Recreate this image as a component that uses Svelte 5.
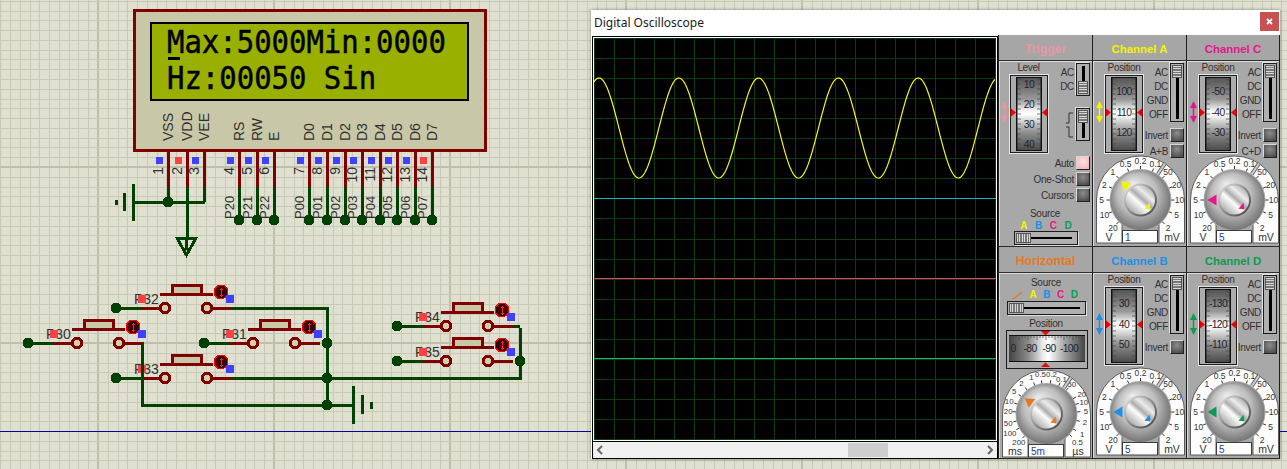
<script>
  const MAJOR = 176;
  const STEP = MAJOR / 18;
  const range = (a, b) => Array.from({ length: b - a + 1 }, (_, i) => a + i);
  const vLines = range(-11, 125).map((i) => ({ x: Math.round(98 + i * STEP), major: i % 18 === 0 }));
  const hLines = range(-18, 33).map((i) => ({ y: Math.round(167 + i * STEP), major: i % 18 === 0 }));

  const pins = [
    [168, 1, 'VSS'], [187, 2, 'VDD'], [204, 3, 'VEE'],
    [239, 4, 'RS', 'P20'], [257, 5, 'RW', 'P21'], [274, 6, 'E', 'P22'],
    [309, 7, 'D0', 'P00'], [327, 8, 'D1', 'P01'], [345, 9, 'D2', 'P02'], [362, 10, 'D3', 'P03'],
    [380, 11, 'D4', 'P04'], [397, 12, 'D5', 'P05'], [415, 13, 'D6', 'P06'], [432, 14, 'D7', 'P07']
  ];
  const switches = [
    [28, 343, 'P30'], [116, 308, 'P32'], [116, 378, 'P33'], [204, 343, 'P31'], [397, 326, 'P34'], [397, 361, 'P35']
  ];
  const junctions = [[327, 343], [327, 378], [327, 405], [520, 361]];

  const gridX = range(0, 20).map((i) => Math.round(i * 20.05));
  const gridY = range(0, 20).map((i) => Math.round(i * 20.05));
  const sine = range(0, 401)
    .map((x) => `${x},${(90 - 50 * Math.cos((2 * Math.PI * (x - 5)) / 79.8)).toFixed(1)}`)
    .join(' ');

  const chNames = ['20', '10', '5', '2', '1', '0.5', '0.2', '0.1', '50', '20', '10', '5', '2'];
  const chLabels = chNames.map((t, i) => {
    const a = ((i - 6) * 22.5 * Math.PI) / 180;
    return [t, 39 * Math.sin(a), -39 * Math.cos(a)];
  });
  const hzLabels = [
    ['200', 67, 588], ['100', 40, 562], ['50', 35, 532], ['20', 35, 497], ['10', 38, 467], ['5', 53, 437],
    ['2', 75, 412], ['1', 105, 395], ['0.5', 132, 386], ['0.2', 165, 384], ['0.1', 195, 401], ['50', 226, 414],
    ['20', 256, 444], ['10', 262, 468], ['5', 268, 497], ['2', 265, 530], ['1', 257, 565], ['0.5', 243, 588]
  ].map(([t, x, y]) => [t, (x - 150) / 3, (y - 505) / 3]);
  const ticks = (labels) =>
    labels.map(([, dx, dy]) => {
      const l = Math.hypot(dx, dy);
      return [dx / l, dy / l];
    });

  const COLORS = { A: '#f4f400', B: '#1a90e8', C: '#e8168c', D: '#0c9c50' };
</script>

{#snippet sw(x, y, label)}
  <g transform="translate({x} {y})">
    <line class="gw" x1="0" y1="0" x2="26" y2="0" />
    <line class="rw" x1="26" y1="0" x2="49" y2="0" />
    <line class="rw" x1="91" y1="0" x2="116" y2="0" />
    <line class="rw" x1="44" y1="-14" x2="97" y2="-14" />
    <rect class="btn" x="56" y="-23" width="29" height="9" />
    <circle class="ring" cx="49" cy="0" r="4.8" />
    <circle class="ring" cx="91" cy="0" r="4.8" />
    <circle class="dot" cx="0" cy="0" r="5.5" />
    <text class="ref" x="18" y="-4">{label}</text>
    <rect class="pad-r" x="22" y="-13" width="8" height="8" />
    <circle class="led" cx="105" cy="-16" r="6.8" />
    <path class="led-a" d="M105 -20.5V-11.5M103.5 -19H106.5M103.5 -13H106.5" />
    <rect class="pad-b" x="110" y="-13" width="8" height="8" />
  </g>
{/snippet}

{#snippet arrow(color, op = 1)}
  <g fill={color} stroke={color} opacity={op}>
    <line x1="3.5" y1="29" x2="3.5" y2="47" stroke-width="1.5" />
    <polygon stroke="none" points="3.5,27 7,34 0,34" />
    <polygon stroke="none" points="3.5,49 7,42 0,42" />
  </g>
{/snippet}

{#snippet drum(nums, ys, color, op = 1)}
  <svg class="drum" width="48" height="80" viewBox="0 0 48 80">
    {@render arrow(color, op)}
    <rect x="8.5" y="0.5" width="39" height="79" fill="#aaa" stroke="#e6e6e6" />
    <rect x="9.5" y="1.5" width="37" height="77" fill="#acacac" stroke="#1c1c1c" />
    <rect x="15" y="3" width="26" height="74" fill="#111" />
    <rect x="16.5" y="4" width="23" height="72" fill="url(#drumV)" />
    {#each range(0, 14) as k}
      <line x1="16.5" x2="20" y1={5 + k * 5} y2={5 + k * 5} stroke="#444" stroke-width="0.7" />
      <line x1="36" x2="39.5" y1={5 + k * 5} y2={5 + k * 5} stroke="#444" stroke-width="0.7" />
    {/each}
    {#each nums as n, i}
      <text class="drum-n" x="28" y={ys[i] + 4}>{n}</text>
    {/each}
    <polygon fill="#f00000" points="9.5,34 15,38.5 9.5,43" />
    <polygon fill="#f00000" points="46.5,34 41,38.5 46.5,43" />
  </svg>
{/snippet}

{#snippet vslider(h, low)}
  <div class="vs" style="height:{h}px">
    <div class="vs-slot"></div>
    <div class={low ? 'vs-thumb low' : 'vs-thumb'}></div>
  </div>
{/snippet}

{#snippet hslider(w)}
  <div class="hs" style="width:{w}px">
    <div class="hs-slot"></div>
    <div class="hs-thumb"></div>
  </div>
{/snippet}

{#snippet dial(labels, angle, color, value, uL, uR)}
  <svg class="dial" width="91" height="88" viewBox="0 0 91 88">
    <path d="M1.5 87V44A44 44 0 0 1 89.5 44V87H64V68H27V87Z" fill="#fdfdfd" stroke="#5a5a5a" />
    {#each ticks(labels) as [ux, uy]}
      <line x1={45.5 + ux * 30} y1={44 + uy * 30} x2={45.5 + ux * 34} y2={44 + uy * 34} stroke="#333" />
    {/each}
    {#each labels as [t, dx, dy]}
      <text class={labels.length > 13 ? 'dial-n small' : 'dial-n'} x={45.5 + dx} y={44 + dy + 3}>{t}</text>
    {/each}
    <line x1={45.5 + 31 * 0.556} y1={44 - 31 * 0.831} x2={45.5 + 44 * 0.556} y2={44 - 44 * 0.831} stroke="#666" stroke-width="4" />
    <line x1={45.5 + 31 * 0.556} y1={44 - 31 * 0.831} x2={45.5 + 44 * 0.556} y2={44 - 44 * 0.831} stroke="#cfcfcf" stroke-width="2" />
    <circle cx="45.5" cy="44" r="31" fill="#a8a8a8" />
    <circle cx="45.5" cy="44" r="30" fill="url(#knob)" />
    <circle cx="45.5" cy="44" r="16.5" fill="url(#capRing)" />
    <circle cx="45.5" cy="44" r="14.5" fill="url(#cap)" />
    <polygon fill={color} points="0,-27 -5.5,-18 5.5,-18" transform="translate(45.5 44) rotate({angle})" />
    <polygon fill={color} points="54.5,46.7 55.5,53.3 49.5,52.7" />
    <rect x="27.5" y="74.5" width="35" height="12.5" fill="#fff" stroke="#3c3c3c" />
    <text class="dial-v" x="30" y="85">{value}</text>
    <text class="dial-u" x="14" y="85">{uL}</text>
    <text class="dial-u" x="77" y="85">{uR}</text>
  </svg>
{/snippet}

{#snippet channel(name, nums, angle, value, sum)}
  <section class="cell">
    <header class="hd" style="color:{COLORS[name]}">Channel {name}</header>
    <div class="body">
      <div class="top">
        <div class="left">
          <div class="cap">Position</div>
          {@render drum(nums, [17, 38, 58], COLORS[name])}
        </div>
        <div class="right">
          <div class="modes">
            <div class="ml">
              <span>AC</span><span>DC</span><span>GND</span><span>OFF</span>
            </div>
            {@render vslider(59, false)}
          </div>
          <div class="brow first"><span>Invert</span><i class="pb"></i></div>
          {#if sum}
            <div class="brow"><span>{sum}</span><i class="pb"></i></div>
          {/if}
        </div>
      </div>
      {@render dial(chLabels, angle, COLORS[name], value, 'V', 'mV')}
    </div>
  </section>
{/snippet}

<main class="page">
  <svg class="sch" width="1287" height="469" viewBox="0 0 1287 469">
    <defs>
      <linearGradient id="drumV" x1="0" y1="0" x2="0" y2="1">
        <stop offset="0" stop-color="#555" />
        <stop offset="0.3" stop-color="#9a9a9a" />
        <stop offset="0.44" stop-color="#eee" />
        <stop offset="0.5" stop-color="#fff" />
        <stop offset="0.58" stop-color="#ddd" />
        <stop offset="0.75" stop-color="#909090" />
        <stop offset="1" stop-color="#4c4c4c" />
      </linearGradient>
      <linearGradient id="drumH" x1="0" y1="0" x2="1" y2="0">
        <stop offset="0" stop-color="#444" />
        <stop offset="0.25" stop-color="#8a8a8a" />
        <stop offset="0.45" stop-color="#eee" />
        <stop offset="0.52" stop-color="#fff" />
        <stop offset="0.72" stop-color="#aaa" />
        <stop offset="1" stop-color="#444" />
      </linearGradient>
      <radialGradient id="knob" cx="0.5" cy="0.5" r="0.55" fx="0.36" fy="0.22">
        <stop offset="0" stop-color="#ececec" />
        <stop offset="0.6" stop-color="#bcbcbc" />
        <stop offset="1" stop-color="#6a6a6a" />
      </radialGradient>
      <linearGradient id="capRing" x1="0.1" y1="0.1" x2="0.9" y2="0.9">
        <stop offset="0" stop-color="#d8d8d8" />
        <stop offset="0.5" stop-color="#8c8c8c" />
        <stop offset="1" stop-color="#4c4c4c" />
      </linearGradient>
      <linearGradient id="cap" x1="0.1" y1="0.95" x2="0.9" y2="0.05">
        <stop offset="0" stop-color="#9c9c9c" />
        <stop offset="0.3" stop-color="#e2e2e2" />
        <stop offset="0.42" stop-color="#fcfcfc" />
        <stop offset="0.55" stop-color="#acacac" />
        <stop offset="0.72" stop-color="#ececec" />
        <stop offset="1" stop-color="#a0a0a0" />
      </linearGradient>
    </defs>

    <g class="grid">
      {#each vLines as l}
        <line x1={l.x} x2={l.x} y1="0" y2="469" stroke={l.major ? '#bfbfae' : '#c9c9b8'} stroke-width={l.major ? 2 : 1} />
      {/each}
      {#each hLines as l}
        <line y1={l.y} y2={l.y} x1="0" x2="1287" stroke={l.major ? '#bfbfae' : '#c9c9b8'} stroke-width={l.major ? 2 : 1} />
      {/each}
    </g>
    <line x1="0" x2="1287" y1="431" y2="431" stroke="#0000a0" />

    <rect x="134" y="10" width="351" height="140" fill="#c8c8a8" stroke="#800000" stroke-width="3" />
    <rect x="151" y="23" width="317" height="77" fill="#99b000" stroke="#000" stroke-width="2" />
    <rect x="150" y="99" width="18" height="2" fill="#000" />
    <rect x="451" y="99" width="18" height="2" fill="#000" />
    <rect x="168" y="57" width="12" height="3" fill="#000" />
    <text class="lcd" transform="translate(167 53) scale(0.905 1)">Max:5000Min:0000</text>
    <text class="lcd" transform="translate(167 89) scale(0.905 1)">Hz:00050 Sin</text>

    {#each pins as [x, n, name, net]}
      <line class="rw" x1={x} x2={x} y1="151" y2="187" />
      <line class="gw" x1={x} x2={x} y1="187" y2={x > 210 ? 220 : 202} />
      <rect class={n === 2 || n === 14 ? 'pad-r' : 'pad-b'} x={x - 12.5} y="157" width="7" height="7" />
      <text class="pin" transform="translate({x + 5} 141) rotate(-90)">{name}</text>
      <text class="pin num" transform="translate({x - 5} 167) rotate(-90)">{n}</text>
      {#if net}
        <text class="pin net" transform="translate({x - 5} 219) rotate(-90)">{net}</text>
        <circle class="dot" cx={x} cy="220" r="5.5" />
      {/if}
    {/each}
    <path class="gw" d="M134 202H205M187 202V238" />
    <circle class="dot" cx="168" cy="202" r="5.5" />
    <path class="gb" d="M133 184V221" />
    <path class="gb" d="M124 193V211" />
    <path class="gb" d="M116 200V205" />
    <path class="gw" d="M177 238H196L186.5 255Z M186.5 238V250" />

    {#each switches as [x, y, label]}
      {@render sw(x, y, label)}
    {/each}
    <path class="gw" d="M232 308H327V405M232 378H520V328M513 326H520M142 343V405H353" />
    {#each junctions as [x, y]}
      <circle class="dot" cx={x} cy={y} r="5.5" />
    {/each}
    <path class="gb" d="M353 386V424" />
    <path class="gb" d="M362 395V414" />
    <path class="gb" d="M371 402V409" />
  </svg>

  <div class="win">
    <div class="title">
      <span>Digital Oscilloscope</span>
      <button class="close" aria-label="close"><svg width="7" height="7" viewBox="0 0 7 7"><path d="M1 1L6 6M6 1L1 6" stroke="#fff" stroke-width="1.8" /></svg></button>
    </div>
    <div class="main">
      <div class="scope">
        <svg class="screen" width="402" height="402" viewBox="0 0 402 402">
          <rect width="402" height="402" fill="#000" />
          {#each gridX as x}
            <line x1={x + 0.5} x2={x + 0.5} y1="0" y2="402" stroke="#0c3c10" />
          {/each}
          {#each gridY as y}
            <line y1={y + 0.5} y2={y + 0.5} x1="0" x2="402" stroke="#0c3c10" />
          {/each}
          <line x1="0" x2="402" y1="160.5" y2="160.5" stroke="#12b8c0" />
          <line x1="0" x2="402" y1="240.5" y2="240.5" stroke="#e84060" />
          <line x1="0" x2="402" y1="320.5" y2="320.5" stroke="#10c060" />
          <polyline points={sine} fill="none" stroke="#f6f620" stroke-width="1.2" />
        </svg>
        <div class="sbar">
          <svg width="8" height="10" viewBox="0 0 8 10"><path d="M6 1L2 5L6 9" fill="none" stroke="#666" stroke-width="2" /></svg>
          <div class="thumb"></div>
          <svg width="8" height="10" viewBox="0 0 8 10"><path d="M2 1L6 5L2 9" fill="none" stroke="#666" stroke-width="2" /></svg>
        </div>
      </div>

      <div class="panel">
        <section class="cell">
          <header class="hd big" style="color:#e898a4">Trigger</header>
          <div class="body">
            <div class="top trig">
              <div class="left">
                <div class="cap">Level</div>
                {@render drum(['10', '20', '30', '40'], [10, 30, 50, 70], '#e898a4', 0.9)}
              </div>
              <div class="right">
                <div class="modes">
                  <div class="ml"><span>AC</span><span>DC</span></div>
                  {@render vslider(33, true)}
                </div>
                <div class="modes edge">
                  <svg width="9" height="26" viewBox="0 0 9 26">
                    <path d="M1 11H4V1H8M1 15H4V25H8" fill="none" stroke="#333" />
                  </svg>
                  {@render vslider(33, false)}
                </div>
              </div>
            </div>
            <div class="btns">
              <div class="brow"><span>Auto</span><i class="pb lit"></i></div>
              <div class="brow"><span>One-Shot</span><i class="pb"></i></div>
              <div class="brow"><span>Cursors</span><i class="pb"></i></div>
            </div>
            <div class="src t-src">Source</div>
            <div class="abcd t-abcd">
              {#each Object.entries(COLORS) as [k, c]}<b style="color:{c}">{k}</b>{/each}
            </div>
            <div class="t-slider">{@render hslider(64)}</div>
          </div>
        </section>

        {@render channel('A', ['100', '110', '120'], -45, '1', 'A+B')}
        {@render channel('C', ['-50', '-40', '-30'], -90, '5', 'C+D')}

        <section class="cell">
          <header class="hd big" style="color:#e87820">Horizontal</header>
          <div class="body">
            <div class="src h-src">Source</div>
            <div class="abcd h-abcd">
              <svg width="11" height="8" viewBox="0 0 11 8"><path d="M0 7.5H2L10 1" fill="none" stroke="#e87820" stroke-width="1.2" /></svg>
              {#each Object.entries(COLORS) as [k, c]}<b style="color:{c}">{k}</b>{/each}
            </div>
            <div class="h-slider">{@render hslider(79)}</div>
            <div class="src h-pos">Position</div>
            <svg class="hdrum" width="82" height="39" viewBox="0 0 82 39">
              <rect x="0.5" y="0.5" width="81" height="38" fill="#acacac" stroke="#1c1c1c" />
              <rect x="3" y="5" width="76" height="27" fill="#111" />
              <rect x="3" y="6" width="76" height="25" fill="url(#drumH)" />
              {#each range(0, 24) as k}
                <line x1={4 + k * 3} x2={4 + k * 3} y1="6" y2={k % 3 === 0 ? 10 : 8} stroke="#444" stroke-width="0.7" />
              {/each}
              <text class="drum-n" x="7" y="22">0</text>
              <text class="drum-n" x="24" y="22">-80</text>
              <text class="drum-n" x="43" y="22">-90</text>
              <text class="drum-n" x="63" y="22">-100</text>
              <polygon fill="#f00000" points="35,1 44,1 39.5,5.5" />
              <polygon fill="#f00000" points="35,37 44,37 39.5,32.5" />
            </svg>
            {@render dial(hzLabels, -54, '#e87820', '5m', 'ms', 'µs')}
          </div>
        </section>

        {@render channel('B', ['30', '40', '50'], -90, '5', '')}
        {@render channel('D', ['-130', '-120', '-110'], -90, '5', '')}
      </div>
    </div>
  </div>
</main>

<style>
  :global(body) {
    margin: 0;
    background: #e0e0d0;
  }
  .page {
    position: relative;
    width: 1287px;
    height: 469px;
    overflow: hidden;
    font-family: 'Liberation Sans', Arial, sans-serif;
  }
  .sch {
    position: absolute;
    inset: 0;
    shape-rendering: crispEdges;
  }
  .rw {
    stroke: #800000;
    stroke-width: 3;
    fill: none;
  }
  .gw {
    stroke: #004000;
    stroke-width: 3;
    fill: none;
  }
  .gb {
    stroke: #004000;
    stroke-width: 3;
    fill: none;
  }
  .btn {
    fill: #c8c8a8;
    stroke: #800000;
    stroke-width: 3;
  }
  .ring {
    fill: #d0d0b0;
    stroke: #800000;
    stroke-width: 3;
  }
  .dot {
    fill: #004000;
  }
  .pad-r {
    fill: #ff4040;
  }
  .pad-b {
    fill: #4040ff;
  }
  .led {
    fill: #3c0000;
    stroke: #ff0000;
    stroke-width: 1.4;
  }
  .led-a {
    stroke: #ff2020;
    fill: none;
  }
  .ref {
    font: 14px 'Liberation Sans', Arial, sans-serif;
    fill: #303030;
  }
  .lcd {
    font: 32px 'DejaVu Sans Mono', 'Liberation Mono', monospace;
    fill: #000;
    stroke: #000;
    stroke-width: 0.5px;
    white-space: pre;
  }
  .pin {
    font: 14px 'Liberation Sans', Arial, sans-serif;
    fill: #303030;
  }
  .num {
    text-anchor: end;
  }
  .net {
    font-size: 13px;
  }

  .win {
    position: absolute;
    left: 591px;
    top: 10px;
    width: 689px;
    height: 449px;
    background: #fff;
    box-shadow: 0 0 3px rgba(0, 0, 0, 0.45);
    display: flex;
    flex-direction: column;
  }
  .title {
    height: 25px;
    flex: none;
    display: flex;
    align-items: center;
    justify-content: space-between;
    padding-left: 3px;
    font: 12px 'Noto Sans', 'Open Sans', sans-serif;
    color: #1a1a1a;
  }
  .close {
    width: 19px;
    height: 19px;
    margin: 0 1px 3px 0;
    padding: 0;
    border: 0;
    background: #c75050;
    display: flex;
    align-items: center;
    justify-content: center;
  }
  .main {
    flex: 1;
    display: flex;
    min-height: 0;
  }
  .scope {
    width: 407px;
    flex: none;
    padding: 1px 0 0 1px;
    box-sizing: border-box;
    display: flex;
    flex-direction: column;
  }
  .screen {
    display: block;
    border: 1px solid #000;
    padding: 1px;
    background: #fff;
  }
  .sbar {
    flex: 1;
    width: 406px;
    box-sizing: border-box;
    background: #f0f0f0;
    border-bottom: 1px solid #000;
    border-left: 1px solid #000;
    border-right: 1px solid #000;
    display: flex;
    align-items: center;
    justify-content: space-between;
    position: relative;
    padding: 0 3px;
  }
  .thumb {
    position: absolute;
    left: 255px;
    top: 1px;
    bottom: 1px;
    width: 40px;
    background: #cdcdcd;
  }
  .panel {
    width: 282px;
    flex: none;
    display: grid;
    grid-template-columns: repeat(3, 94px);
    grid-template-rows: 212px 212px;
    background: #a8a8a8;
    font-size: 9.5px;
    color: #303030;
  }
  .cell {
    display: flex;
    flex-direction: column;
    border-left: 1px solid #1e1e1e;
    box-sizing: border-box;
    border-bottom: 1px solid #2a2a2a;
    box-shadow: inset 0 1px 0 #cfcfcf;
    min-width: 0;
  }
  .cell:nth-child(3n) {
    border-right: 1px solid #1e1e1e;
  }
  .hd {
    height: 26px;
    flex: none;
    box-sizing: border-box;
    border-bottom: 1px solid #2e2e2e;
    font-size: 11.4px;
    font-weight: 700;
    display: flex;
    align-items: center;
    justify-content: center;
    background: #a6a6a6;
    padding-top: 2px;
  }
  .hd.big {
    font-size: 12.2px;
  }
  .body {
    flex: 1;
    display: flex;
    flex-direction: column;
    padding-left: 1px;
    box-shadow: inset 1px 1px 0 #dadada;
  }
  .top {
    display: flex;
    height: 95px;
    padding-left: 2px;
    flex: none;
  }
  .left {
    width: 48px;
    flex: none;
  }
  .cap {
    height: 12px;
    margin-top: 1px;
    line-height: 12px;
    text-align: center;
    padding-left: 8px;
    font-size: 10px;
    letter-spacing: -0.35px;
  }
  .drum {
    display: block;
  }
  .drum-n {
    font: 10.3px 'Liberation Sans', Arial, sans-serif;
    letter-spacing: -0.6px;
    fill: #1c2430;
    text-anchor: middle;
  }
  .right {
    flex: 1;
    padding: 2px 2px 0 0;
    min-width: 0;
    display: flex;
    flex-direction: column;
    align-items: flex-end;
  }
  .modes {
    display: flex;
    justify-content: flex-end;
    gap: 2px;
  }
  .ml {
    display: flex;
    flex-direction: column;
    align-items: flex-end;
    padding-top: 3px;
    font-size: 10px;
    letter-spacing: -0.3px;
  }
  .ml span {
    height: 14px;
    line-height: 14px;
  }
  .edge {
    margin-top: 12px;
    align-items: center;
  }
  .brow {
    display: flex;
    justify-content: flex-end;
    align-items: center;
    gap: 2px;
    height: 14px;
    margin-top: 2px;
    font-size: 10px;
    letter-spacing: -0.3px;
  }
  .brow.first {
    margin-top: 6px;
  }
  .pb {
    display: block;
    width: 14px;
    height: 14px;
    box-sizing: border-box;
    border: 1px solid #d8d8d8;
    border-right-color: #222;
    border-bottom-color: #222;
    background: radial-gradient(circle at 50% 35%, #8c8c8c, #4a4a4a 90%);
  }
  .pb.lit {
    background: radial-gradient(circle at 50% 40%, #ffe4e4, #f8b0b0 95%);
  }
  .vs {
    position: relative;
    width: 14px;
    box-sizing: border-box;
    border: 1px solid #1c1c1c;
    box-shadow: -1px -1px 0 #e0e0e0;
    background: #b0b0b0;
  }
  .vs-slot {
    position: absolute;
    left: 4.5px;
    top: 2px;
    bottom: 2px;
    width: 3px;
    background: #000;
  }
  .vs-thumb {
    position: absolute;
    left: 1px;
    top: 1px;
    width: 10px;
    height: 13px;
    box-sizing: border-box;
    border: 1px solid #555;
    background: repeating-linear-gradient(#d8d8d8 0 1px, #777 1px 2.4px);
  }
  .vs-thumb.low {
    top: auto;
    bottom: 1px;
  }
  .hs {
    position: relative;
    height: 14px;
    box-sizing: border-box;
    border: 1px solid #1c1c1c;
    box-shadow: 1px 1px 0 #e0e0e0;
    background: #b0b0b0;
  }
  .hs-slot {
    position: absolute;
    top: 5px;
    left: 4px;
    right: 5px;
    height: 2px;
    background: #000;
  }
  .hs-thumb {
    position: absolute;
    left: 1px;
    top: 1px;
    width: 15px;
    height: 10px;
    box-sizing: border-box;
    border: 1px solid #555;
    background: repeating-linear-gradient(90deg, #d8d8d8 0 1px, #777 1px 2.4px);
  }
  .dial {
    display: block;
    flex: none;
    margin-left: 1px;
    overflow: visible;
  }
  .dial-n {
    font: 8.5px 'Liberation Sans', Arial, sans-serif;
    fill: #333;
    text-anchor: middle;
  }
  .dial-n.small {
    font-size: 7.8px;
  }
  .dial-v {
    font: 10px 'Liberation Sans', Arial, sans-serif;
    fill: #2040a0;
  }
  .dial-u {
    font: 10.5px 'Liberation Sans', Arial, sans-serif;
    fill: #333;
    text-anchor: middle;
  }
  .trig .left {
    margin-left: -1.5px;
    margin-right: 1.5px;
  }
  .btns {
    margin-top: -2px;
    padding-right: 2px;
    display: flex;
    flex-direction: column;
  }
  .src {
    text-align: center;
    font-size: 10px;
    letter-spacing: -0.25px;
    line-height: 12px;
  }
  .t-src {
    margin-top: 6px;
    margin-right: 2px;
  }
  .abcd {
    display: flex;
    justify-content: center;
    align-items: center;
    font-size: 10px;
    line-height: 11px;
  }
  .abcd b {
    font-weight: 700;
  }
  .t-abcd {
    gap: 7.5px;
    margin-top: 0;
  }
  .t-slider {
    margin: 0 0 0 14px;
  }
  .h-src {
    margin-top: 4px;
  }
  .h-abcd {
    gap: 6.5px;
    padding-right: 2px;
  }
  .h-slider {
    margin: 1px 0 0 7px;
  }
  .h-pos {
    margin-top: 3px;
  }
  .hdrum {
    display: block;
    margin: 0 0 1px 6px;
    flex: none;
  }
</style>
